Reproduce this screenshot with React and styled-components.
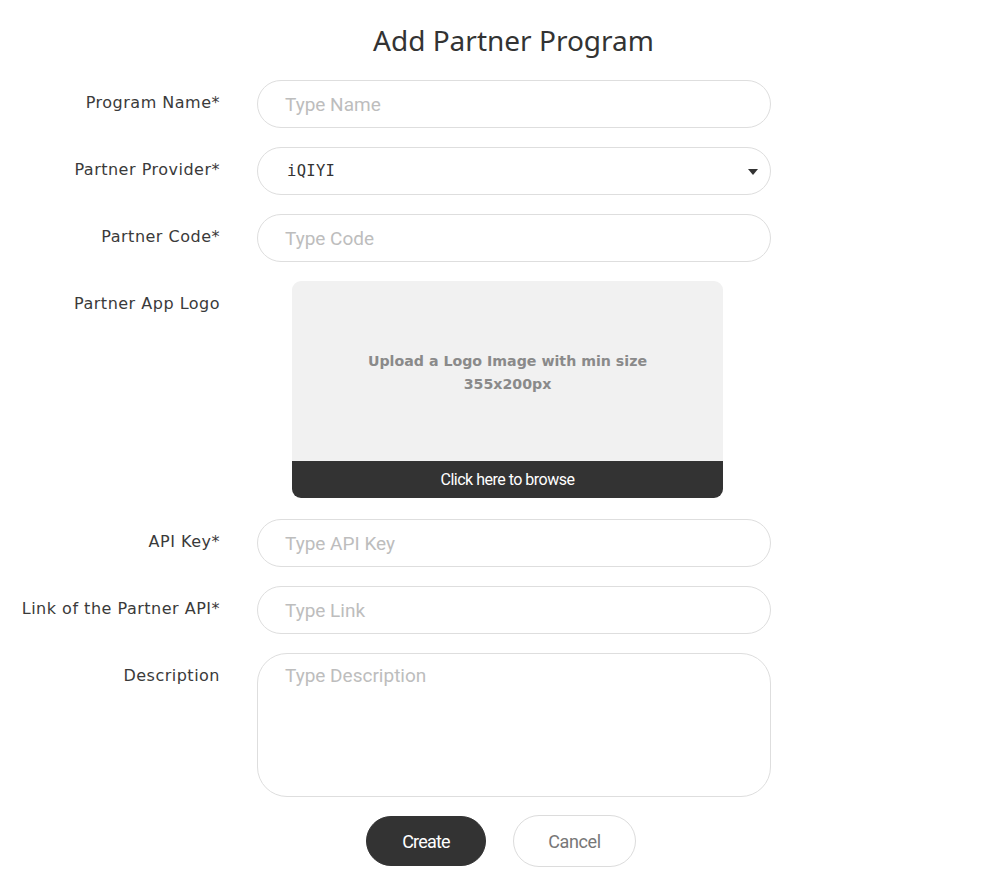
import React from "react";
import styled, { createGlobalStyle } from "styled-components";

const GlobalStyle = createGlobalStyle`
  body {
    margin: 0;
    background: #ffffff;
    font-family: "DejaVu Sans", "Noto Sans", sans-serif;
  }
`;

const fields = [
  { label: "Program Name*", placeholder: "Type Name" },
  { label: "Partner Provider*", select: "iQIYI" },
  { label: "Partner Code*", placeholder: "Type Code" },
  { label: "Partner App Logo", upload: true },
  { label: "API Key*", placeholder: "Type API Key" },
  { label: "Link of the Partner API*", placeholder: "Type Link" },
  { label: "Description", placeholder: "Type Description", area: true },
];

const App = () => {
  return (
    <Page>
      <GlobalStyle />
      <Title>Add Partner Program</Title>
      <Form>
        {fields.map((f) => (
          <React.Fragment key={f.label}>
            <Label>{f.label}</Label>
            {f.upload ? (
              <Upload>
                <UploadArea>
                  Upload a Logo Image with min size
                  <br />
                  355x200px
                </UploadArea>
                <BrowseBar>Click here to browse</BrowseBar>
              </Upload>
            ) : f.select ? (
              <Field $select>
                <SelectValue>{f.select}</SelectValue>
                <Caret width="10" height="6" viewBox="0 0 10 6">
                  <path d="M0 0 L10 0 L5 6 Z" fill="#333" />
                </Caret>
              </Field>
            ) : (
              <Field $area={f.area}>
                <Placeholder>{f.placeholder}</Placeholder>
              </Field>
            )}
          </React.Fragment>
        ))}
      </Form>
      <Actions>
        <Button $primary>Create</Button>
        <Button>Cancel</Button>
      </Actions>
    </Page>
  );
};

export default App;

const Page = styled.div`
  width: 981px;
  padding-top: 22px;
`;

const Title = styled.h1`
  margin: 0 0 22px 0;
  text-align: center;
  padding-left: 46px;
  font-family: "Noto Sans", sans-serif;
  font-size: 28px;
  line-height: 36px;
  font-weight: 400;
  color: #333;
`;

const Form = styled.div`
  display: grid;
  grid-template-columns: 220px 514px;
  column-gap: 37px;
  row-gap: 19px;
`;

const Label = styled.div`
  text-align: right;
  font-size: 16px;
  letter-spacing: 0.5px;
  line-height: 20px;
  padding-top: 13px;
  color: #3a3a3a;
  white-space: nowrap;
`;

const Field = styled.div`
  box-sizing: border-box;
  height: ${(p) => (p.$area ? "144px" : "48px")};
  border: 1px solid #dedede;
  border-radius: ${(p) => (p.$area ? "30px" : "24px")};
  display: flex;
  align-items: ${(p) => (p.$area ? "flex-start" : "center")};
  justify-content: space-between;
  padding: ${(p) =>
    p.$area ? "10px 20px 0 27px" : p.$select ? "0 12px 0 27px" : "0 18px 0 27px"};
`;

const Placeholder = styled.span`
  font-family: Roboto, sans-serif;
  font-size: 19px;
  color: #bdbdbd;
`;

const SelectValue = styled.span`
  font-family: "DejaVu Sans Mono", monospace;
  font-size: 15.5px;
  letter-spacing: 0.3px;
  color: #333;
  padding-left: 2px;
`;

const Caret = styled.svg`
  display: block;
  margin-top: 2px;
`;

const Upload = styled.div`
  margin: 0 0 2px 35px;
  width: 431px;
  height: 217px;
  border-radius: 9px;
  overflow: hidden;
  display: flex;
  flex-direction: column;
`;

const UploadArea = styled.div`
  flex: 1;
  background: #f1f1f1;
  display: flex;
  align-items: center;
  justify-content: center;
  text-align: center;
  padding-top: 4px;
  font-size: 14.2px;
  line-height: 23px;
  font-weight: 700;
  color: #8a8a8a;
`;

const BrowseBar = styled.div`
  height: 37px;
  background: #333;
  color: #fff;
  display: flex;
  align-items: center;
  justify-content: center;
  font-family: Roboto, sans-serif;
  font-size: 16px;
  letter-spacing: -0.5px;
`;

const Actions = styled.div`
  display: flex;
  justify-content: center;
  gap: 27px;
  padding-left: 21px;
  margin-top: 18px;
`;

const Button = styled.button`
  box-sizing: border-box;
  width: ${(p) => (p.$primary ? "120px" : "123px")};
  height: ${(p) => (p.$primary ? "50px" : "52px")};
  margin-top: ${(p) => (p.$primary ? "1px" : "0")};
  border-radius: 26px;
  border: 1px solid ${(p) => (p.$primary ? "#333" : "#dcdcdc")};
  background: ${(p) => (p.$primary ? "#333" : "#fff")};
  color: ${(p) => (p.$primary ? "#fff" : "#777")};
  font-family: Roboto, sans-serif;
  font-size: 18px;
  letter-spacing: ${(p) => (p.$primary ? "-0.8px" : "-0.4px")};
  cursor: pointer;
`;
